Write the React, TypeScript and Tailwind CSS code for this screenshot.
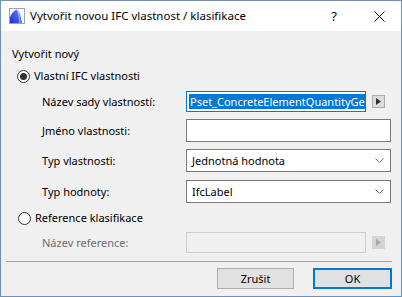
import React from "react";

const font = { fontFamily: '"Noto Sans", "Open Sans", sans-serif' };

function Chevron() {
  return (
    <svg width="9" height="6" viewBox="0 0 9 6" className="shrink-0">
      <path d="M0.5 0.5 L4.5 4.5 L8.5 0.5" fill="none" stroke="#6b6b6b" strokeWidth="1" />
    </svg>
  );
}

function ArrowBtn({ disabled }: { disabled?: boolean }) {
  return (
    <div
      className={
        "ml-[6px] w-[13px] h-[13px] flex items-center justify-center border " +
        (disabled ? "bg-[#d4d4d4] border-[#d4d4d4]" : "bg-[#dcdcdc] border-[#adadad]")
      }
    >
      <svg width="5" height="7" viewBox="0 0 5 7">
        <path d="M0 0 L5 3.5 L0 7 Z" fill={disabled ? "#a8a8a8" : "#303030"} />
      </svg>
    </div>
  );
}

function Radio({ checked }: { checked?: boolean }) {
  return (
    <div className="w-[13px] h-[13px] rounded-full border border-[#333333] bg-white flex items-center justify-center shrink-0">
      {checked && <div className="w-[7px] h-[7px] rounded-full bg-[#333333]" />}
    </div>
  );
}

export default function App() {
  return (
    <div
      className="w-[402px] h-[297px] border border-[#6f91b8] bg-[#f0f0f0] flex flex-col text-[11px] text-black leading-[16px] overflow-hidden"
      style={font}
    >
      {/* Title bar */}
      <div className="h-[30px] bg-white flex items-center shrink-0">
        <div className="ml-[8px] w-[16px] h-[16px]">
          <svg width="16" height="16" viewBox="0 0 16 16">
            <defs>
              <linearGradient id="g" x1="0" y1="1" x2="1" y2="0">
                <stop offset="0" stopColor="#1a2fd0" />
                <stop offset="1" stopColor="#6f8cff" />
              </linearGradient>
            </defs>
            <rect x="0.5" y="0.5" width="15" height="15" fill="#ffffff" stroke="#9aa3b5" />
            <path d="M1 15 L1 9 Q4 2 8 1.5 Q11 3 13 15 Z" fill="url(#g)" />
            <path d="M8 1.5 Q10 4 11 15" fill="none" stroke="#c8d2ff" strokeWidth="0.8" />
          </svg>
        </div>
        <div className="ml-[5px] text-[11.5px] text-black">Vytvořit novou IFC vlastnost / klasifikace</div>
        <div className="flex-1" />
        <div className="w-[46px] flex justify-center text-[13px]">?</div>
        <div className="w-[44px] flex justify-center">
          <svg width="11" height="11" viewBox="0 0 11 11">
            <path d="M0.5 0.5 L10.5 10.5 M10.5 0.5 L0.5 10.5" stroke="#000" strokeWidth="1" />
          </svg>
        </div>
      </div>

      {/* Body */}
      <div className="flex flex-col pl-[5px] pr-[9px]">
        <div className="ml-[6px] mt-[15px] h-[16px] flex items-center">Vytvořit nový</div>

        <div className="ml-[11px] mt-[6px] h-[16px] flex items-center gap-[4px]">
          <Radio checked />
          <span>Vlastní IFC vlastnosti</span>
        </div>

        <div className="mt-[7px] flex items-center h-[21px]">
          <div className="ml-[36px] w-[144px]">Název sady vlastností:</div>
          <div className="w-[180px] h-[21px] border border-[#0078d7] bg-white flex items-center pl-[2px] overflow-hidden">
            <span className="bg-[#0078d7] text-white whitespace-nowrap leading-[15px] px-[1px]">
              Pset_ConcreteElementQuantityGe
            </span>
          </div>
          <ArrowBtn />
        </div>

        <div className="mt-[7px] flex items-center h-[23px]">
          <div className="ml-[36px] w-[144px]">Jméno vlastnosti:</div>
          <div className="w-[205px] h-[23px] border border-[#7a7a7a] bg-white" />
        </div>

        <div className="mt-[7px] flex items-center h-[23px]">
          <div className="ml-[36px] w-[144px]">Typ vlastnosti:</div>
          <div className="w-[205px] h-[23px] border border-[#7a7a7a] bg-white flex items-center pl-[5px] pr-[6px]">
            <span className="flex-1">Jednotná hodnota</span>
            <Chevron />
          </div>
        </div>

        <div className="mt-[8px] flex items-center h-[23px]">
          <div className="ml-[36px] w-[144px]">Typ hodnoty:</div>
          <div className="w-[205px] h-[23px] border border-[#7a7a7a] bg-white flex items-center pl-[5px] pr-[6px]">
            <span className="flex-1">IfcLabel</span>
            <Chevron />
          </div>
        </div>

        <div className="ml-[12px] mt-[7px] h-[16px] flex items-center gap-[4px]">
          <Radio />
          <span>Reference klasifikace</span>
        </div>

        <div className="mt-[6px] flex items-center h-[21px]">
          <div className="ml-[36px] w-[144px] text-[#6d6d6d]">Název reference:</div>
          <div className="w-[180px] h-[21px] border border-[#cccccc] bg-[#f0f0f0]" />
          <ArrowBtn disabled />
        </div>

        <div className="mt-[8px] ml-[0px] h-px bg-[#a0a0a0]" />

        <div className="mt-[6px] flex justify-end items-center">
          <div className="w-[77px] h-[21px] border border-[#adadad] bg-[#e1e1e1] flex items-center justify-center">
            Zrušit
          </div>
          <div className="ml-[19px] w-[79px] h-[21px] border-2 border-[#0078d7] bg-[#e1e1e1] flex items-center justify-center">
            OK
          </div>
        </div>
      </div>
    </div>
  );
}
